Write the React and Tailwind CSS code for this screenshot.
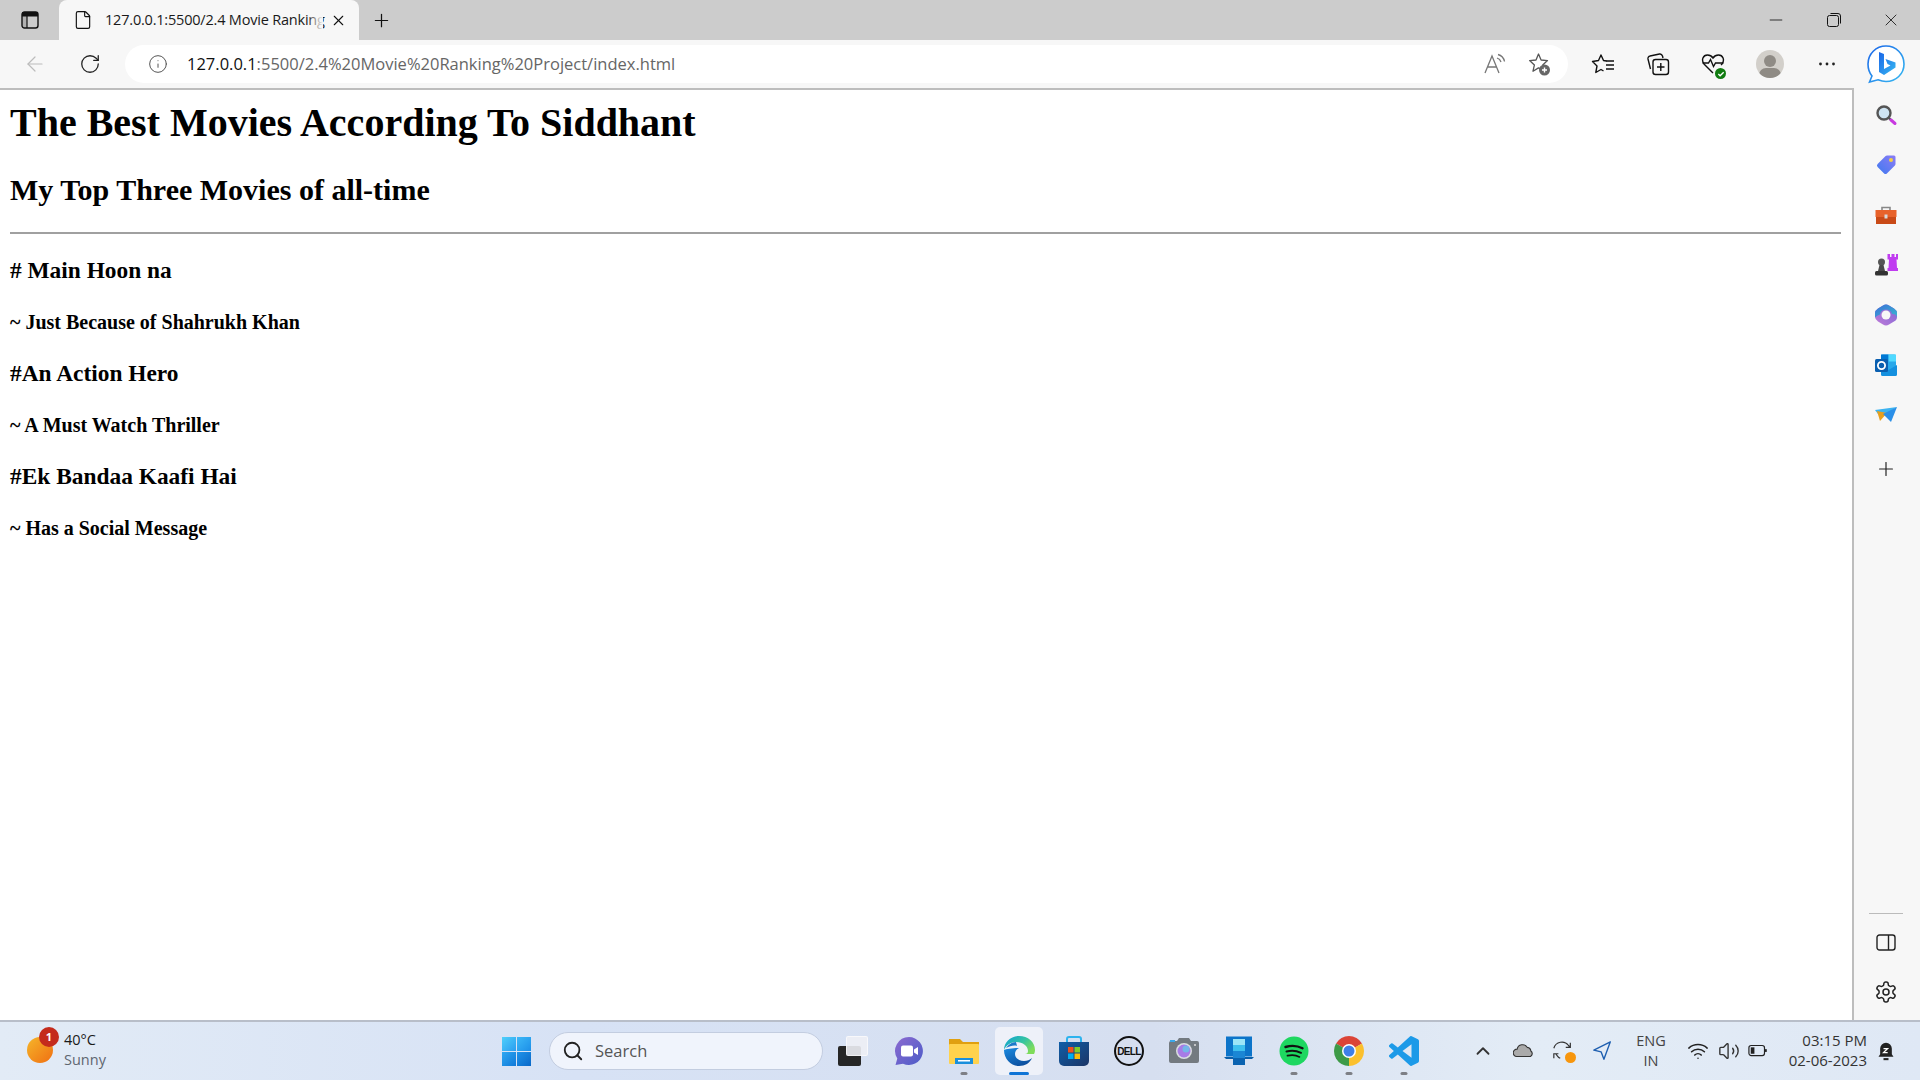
import React from "react";
import { Minus, X, Plus, ArrowLeft, RotateCw, Info, File, Search, ChevronUp, Wifi, Volume2 } from "lucide-react";

const S = ({ size = 24, children, vb = "0 0 24 24", className = "" }) => (
  <svg width={size} height={size} viewBox={vb} fill="none" className={className}>{children}</svg>
);

const Bing = () => (
  <S size={40} vb="0 0 40 40">
    <defs>
      <linearGradient id="bg1" x1="0" y1="0" x2="1" y2="1"><stop offset="0" stopColor="#1b66e8" /><stop offset="1" stopColor="#37b9f1" /></linearGradient>
    </defs>
    <path d="M20 2C10 2 2 10 2 20c0 5 1.500 9 4 12l-2.500 6 8.500-2.200c2.500 1 5 1.700 8 1.700 10 0 18-7.500 18-17.500S30 2 20 2z" stroke="url(#bg1)" strokeWidth="1.600" fill="#fff" />
    <path d="M13 8l5 2v15l6.500-3.500-3-1.500-2-5 10 3.500v5L18 31l-5-3z" fill="url(#bg1)" />
  </S>
);

const SideSearch = () => (
  <S size={24}><circle cx="10" cy="10" r="6.500" fill="#cfe4f2" stroke="#555" strokeWidth="2.400" /><path d="M15 15l2 2" stroke="#555" strokeWidth="2.400" /><path d="M17 17l4 3.500" stroke="#c83ae0" strokeWidth="3" strokeLinecap="round" /></S>
);
const SideTag = () => (
  <S size={24}>
    <defs><linearGradient id="tg" x1="0" y1="1" x2="1" y2="0"><stop offset="0" stopColor="#3f7af0" /><stop offset="1" stopColor="#8b7cf5" /></linearGradient></defs>
    <path d="M13 2.500h7a1.500 1.500 0 0 1 1.500 1.500v7a2 2 0 0 1-.6 1.400l-8 8a2 2 0 0 1-2.800 0l-6.500-6.500a2 2 0 0 1 0-2.800l8-8A2 2 0 0 1 13 2.500z" fill="url(#tg)" />
    <circle cx="17" cy="7" r="2" fill="#f4cf45" />
  </S>
);
const SideBox = () => (
  <S size={24}>
    <path d="M8 7V4.500h8V7" stroke="#888" strokeWidth="1.600" />
    <rect x="1.500" y="7" width="21" height="7" fill="#e8622a" />
    <rect x="2" y="14" width="20" height="7" fill="#c94a17" />
    <rect x="10.500" y="11.500" width="3" height="4" fill="#d8d8d8" />
  </S>
);
const SideChess = () => (
  <S size={24}>
    <path d="M13.500 1h2.500v3h1.500V1h3v3H22V1h2v5.500h-1.500L23 15h1v3H13.500v-3h1l.5-8.500h-1.500z" fill="#c03cf0" />
    <circle cx="7.500" cy="9" r="3.500" fill="#555" />
    <path d="M5.500 12h4l1.500 6H4z" fill="#4a4a4a" />
    <rect x="1" y="18" width="13" height="4.500" rx="1.500" fill="#333" />
  </S>
);
const SideOffice = () => (
  <S size={24}>
    <defs>
      <linearGradient id="of1" x1="0" y1="0" x2="1" y2="1"><stop offset="0" stopColor="#3c6fd8" /><stop offset="1" stopColor="#38b7d0" /></linearGradient>
      <linearGradient id="of2" x1="0" y1="1" x2="1" y2="0"><stop offset="0" stopColor="#c07ad8" /><stop offset="1" stopColor="#7a68d6" /></linearGradient>
    </defs>
    <path d="M9 2.500Q12 .5 15 2.500l5 3Q23 7.500 23 10v4q0 3-3 4.500l-5 3Q12 23.500 9 21.500l-5-3Q1 16.500 1 14v-4q0-2.500 3-4.500z" fill="url(#of2)" />
    <path d="M9 2.500Q12 .5 15 2.500l5 3Q23 7.500 23 10v4q-1-3.500-5-3-1-4.500-6-4.500-5 0-6 5-3 1-5 3v-4.500q0-2.500 3-4.500z" fill="url(#of1)" />
    <circle cx="12" cy="12" r="4.500" fill="#f7f7f7" />
  </S>
);
const SideOutlook = () => (
  <S size={24}>
    <rect x="7" y="1.500" width="15" height="20" rx="1.500" fill="#28a8ea" />
    <rect x="7" y="1.500" width="7.500" height="7" fill="#0078d4" />
    <rect x="14.500" y="1.500" width="7.500" height="7" fill="#50d9ff" />
    <path d="M7 12l7.500 5L23 12v9.500a1.500 1.500 0 0 1-1.500 1.500H8.500A1.500 1.500 0 0 1 7 21.500z" fill="#1490df" />
    <rect x="1" y="6" width="13" height="13" rx="1.500" fill="#0a5fb0" />
    <circle cx="7.500" cy="12.500" r="3.600" stroke="#fff" strokeWidth="1.800" />
  </S>
);
const SidePlane = () => (
  <S size={24}>
    <path d="M1 7l22-3-11 7-8 0z" fill="#3cb3f0" />
    <path d="M3 8l10 2-7 8z" fill="#e89f1c" />
    <path d="M23 4l-6 15-8-8z" fill="#2a8fe8" />
  </S>
);

const Weather = () => (
  <div className="w-[510px] pl-[27px] flex items-center shrink-0">
    <div className="relative w-[26px] h-[26px] mt-[-2px]">
      <div className="w-[26px] h-[26px] rounded-full bg-[linear-gradient(135deg,#f5b62a,#f06f12)]" />
      <div className="absolute left-[12px] top-[-10px] w-[20px] h-[20px] rounded-full bg-[#c42b1c] text-white text-[11px] font-bold flex items-center justify-center">1</div>
    </div>
    <div className="ml-[11px] text-[14.5px] leading-[20px] mt-[-2px]">
      <div className="text-[#1a1a1a]">40°C</div>
      <div className="text-[#5f6670]">Sunny</div>
    </div>
  </div>
);

const IconSlot = ({ children, dot }) => (
  <div className="relative w-[30px] h-[30px] flex items-center justify-center shrink-0">
    {children}
    {dot && <span className="absolute bottom-[-9px] left-1/2 -translate-x-1/2 w-[7px] h-[3px] rounded-full bg-[#7d7f85]" />}
  </div>
);

const Win = () => (
  <div className="grid grid-cols-2 gap-[1px] w-[29px] h-[29px] shrink-0">
    <div className="bg-[linear-gradient(135deg,#4fd0fb,#2a9df0)]" />
    <div className="bg-[linear-gradient(135deg,#3db8f7,#1c8fe8)]" />
    <div className="bg-[linear-gradient(135deg,#2ea8f2,#0f78d8)]" />
    <div className="bg-[linear-gradient(135deg,#1f94ea,#0a68c8)]" />
  </div>
);

const TaskView = () => (
  <div className="relative w-[30px] h-[30px]">
    <div className="absolute left-0 bottom-0 w-[23px] h-[20px] rounded-[2px] bg-[#262626]" />
    <div className="absolute right-0 top-0 w-[22px] h-[20px] rounded-[2px] bg-[#eef0f5]/90 border border-white/60" />
  </div>
);
const Teams = () => (
  <S size={30} vb="0 0 30 30">
    <defs><linearGradient id="tm" x1="0" y1="0" x2="1" y2="1"><stop offset="0" stopColor="#8c6ad0" /><stop offset="1" stopColor="#4c5cc8" /></linearGradient></defs>
    <path d="M15 1a14 14 0 1 1-6 26.700L1.500 29l1.800-6.500A14 14 0 0 1 15 1z" fill="url(#tm)" />
    <rect x="7" y="9.500" width="12" height="11" rx="2" fill="#fff" />
    <path d="M20 13.500l4-2.500v8l-4-2.500z" fill="#fff" />
  </S>
);
const Explorer = () => (
  <S size={30} vb="0 0 30 30">
    <path d="M0 3h11l3 3h16v5H0z" fill="#e0a010" />
    <rect x="0" y="8" width="30" height="20" rx="1" fill="#ffd24d" />
    <path d="M6 22h18v6H6z" fill="#1a8fdc" />
    <rect x="9" y="24" width="12" height="1.500" fill="#fff" />
  </S>
);
const Edge = () => (
  <S size={32} vb="0 0 32 32">
    <defs>
      <linearGradient id="ed1" x1="0" y1="0" x2="1" y2="0.6"><stop offset="0" stopColor="#0d9fd8" /><stop offset="0.6" stopColor="#36c5a0" /><stop offset="1" stopColor="#7fdc5a" /></linearGradient>
      <linearGradient id="ed2" x1="0" y1="0" x2="0.6" y2="1"><stop offset="0" stopColor="#1a8ae0" /><stop offset="1" stopColor="#0c4f9f" /></linearGradient>
    </defs>
    <path d="M16 1C7.500 1 1 7.500 1 15c2-5 7-8 12-8 7 0 12 4 12 9 0 2-1 3-3 3h9c.6-1 1-2.500 1-4C32 7 25 1 16 1z" fill="url(#ed1)" />
    <path d="M1 15c0 9 7 16 15 16 6 0 11-3 13-8-2 2-5 3-8 3-5 0-9-3-9-7 0-3 2-5 4-6-6 0-13 1-15 2z" fill="url(#ed2)" />
    <path d="M13 7c-4 0-8 3-10 6 4-2 8-3 11-2z" fill="#1b79c9" />
  </S>
);
const Store = () => (
  <S size={30} vb="0 0 30 30">
    <defs><linearGradient id="st" x1="0" y1="0" x2="1" y2="1"><stop offset="0" stopColor="#0f5ea8" /><stop offset="1" stopColor="#1c3566" /></linearGradient></defs>
    <path d="M8 7V3a2 2 0 0 1 2-2h10a2 2 0 0 1 2 2v4" stroke="#2db3ee" strokeWidth="2" />
    <path d="M0 6h30v19a5 5 0 0 1-5 5H5a5 5 0 0 1-5-5z" fill="url(#st)" />
    <rect x="9" y="11" width="5.500" height="5.500" fill="#f1511b" />
    <rect x="15.500" y="11" width="5.500" height="5.500" fill="#80cc28" />
    <rect x="9" y="17.500" width="5.500" height="5.500" fill="#00adef" />
    <rect x="15.500" y="17.500" width="5.500" height="5.500" fill="#fbbc09" />
  </S>
);
const Dell = () => (
  <div className="w-[30px] h-[30px] rounded-full border-[2px] border-[#111] flex items-center justify-center text-[10px] font-bold text-[#111] tracking-[-0.6px] [font-family:'Liberation_Sans',sans-serif]">DELL</div>
);
const Camera = () => (
  <S size={30} vb="0 0 30 30">
    <path d="M0 7a2 2 0 0 1 2-2h6l2-3h10l2 3h6a2 2 0 0 1 2 2v18a2 2 0 0 1-2 2H2a2 2 0 0 1-2-2z" fill="#737a80" />
    <rect x="1" y="4" width="5" height="2" fill="#3ba7e8" />
    <circle cx="15" cy="15" r="8" fill="#d9dde0" />
    <circle cx="15" cy="15" r="6.500" fill="#a77be6" />
    <circle cx="17" cy="13" r="3.500" fill="#74b6e8" />
    <circle cx="26" cy="9" r="1" fill="#ddd" />
  </S>
);
const Phone = () => (
  <S size={30} vb="0 0 30 30">
    <rect x="2" y="0.500" width="26" height="20" fill="#0c74c9" />
    <path d="M0 21h30l-2 2H2z" fill="#0a5ea8" />
    <rect x="9" y="3" width="12" height="24" rx="1" fill="#3ec0ee" />
    <rect x="9" y="3" width="12" height="6" fill="#9be5f7" />
    <rect x="9" y="15" width="12" height="14" fill="#1b86d4" />
    <rect x="9" y="22" width="12" height="7" fill="#0b63b0" />
  </S>
);
const Spotify = () => (
  <S size={30} vb="0 0 30 30">
    <circle cx="15" cy="15" r="14.500" fill="#1ed760" />
    <path d="M6.500 11c6-1.800 12-1.300 17 1.300" stroke="#111" strokeWidth="2.400" strokeLinecap="round" />
    <path d="M7.500 15.500c5-1.400 10-.9 14.500 1.300" stroke="#111" strokeWidth="2" strokeLinecap="round" />
    <path d="M8.500 19.700c4.200-1 8.500-.7 12 1.200" stroke="#111" strokeWidth="1.700" strokeLinecap="round" />
  </S>
);
const Chrome = () => (
  <S size={30} vb="0 0 30 30">
    <path d="M15 15L2.010 7.500A15 15 0 0 1 27.990 7.500z" fill="#db4437" />
    <path d="M15 15L27.990 7.500A15 15 0 0 1 15 30z" fill="#fbc02d" />
    <path d="M15 15L15 30A15 15 0 0 1 2.010 7.500z" fill="#3d9a47" />
    <circle cx="15" cy="15" r="7" fill="#fff" />
    <circle cx="15" cy="15" r="5.500" fill="#3f7fe8" />
  </S>
);
const VSCode = () => (
  <svg width="30" height="30" viewBox="0 0 24 24">
    <path d="M23.15 2.587L18.21.21a1.494 1.494 0 0 0-1.705.29l-9.46 8.63-4.12-3.128a.999.999 0 0 0-1.276.057L.327 7.261A1 1 0 0 0 .326 8.74L3.899 12 .326 15.26a1 1 0 0 0 .001 1.479L1.65 17.94a.999.999 0 0 0 1.276.057l4.12-3.128 9.46 8.63a1.492 1.492 0 0 0 1.704.29l4.942-2.377A1.5 1.5 0 0 0 24 20.06V3.939a1.5 1.5 0 0 0-.85-1.352zm-5.146 14.861L10.826 12l7.178-5.448v10.896z" fill="#1c9ae8" />
  </svg>
);

const TaskCenter = () => (
  <div className="flex items-center h-full shrink-0">
    <div className="ml-[-8px]"><Win /></div>
    <div className="ml-[18px] w-[274px] h-[38px] rounded-full bg-[#f0f4fc] border border-[#c3cde0] flex items-center pl-[12px] shrink-0">
      <Search size={22} strokeWidth={2} className="text-[#222]" />
      <span className="ml-[11px] text-[16.5px] text-[#555]">Search</span>
    </div>
    <div className="ml-[15px]"><IconSlot><TaskView /></IconSlot></div>
    <div className="ml-[26px]"><IconSlot><Teams /></IconSlot></div>
    <div className="ml-[25px]"><IconSlot dot><Explorer /></IconSlot></div>
    <div className="relative ml-[16px] w-[48px] h-[48px] rounded-[5px] bg-[#eef1f9] flex items-center justify-center shrink-0">
      <Edge />
      <span className="absolute bottom-0 left-1/2 -translate-x-1/2 w-[20px] h-[3px] rounded-full bg-[#0f74d6]" />
    </div>
    <div className="ml-[16px]"><IconSlot><Store /></IconSlot></div>
    <div className="ml-[25px]"><IconSlot><Dell /></IconSlot></div>
    <div className="ml-[25px]"><IconSlot><Camera /></IconSlot></div>
    <div className="ml-[25px]"><IconSlot><Phone /></IconSlot></div>
    <div className="ml-[25px]"><IconSlot dot><Spotify /></IconSlot></div>
    <div className="ml-[25px]"><IconSlot dot><Chrome /></IconSlot></div>
    <div className="ml-[25px]"><IconSlot dot><VSCode /></IconSlot></div>
  </div>
);

const Tray = () => (
  <div className="flex items-center ml-auto pr-[24px] text-[#333] shrink-0">
    <ChevronUp size={22} strokeWidth={2} className="text-[#333]" />
    <div className="ml-[19px]">
      <S size={22}><path d="M4 18a4 4 0 0 1 .5-8 6 6 0 0 1 11-2 4.500 4.500 0 0 1 4 4A3.500 3.500 0 0 1 19 18z" fill="#aaa" stroke="#333" strokeWidth="1.200" /></S>
    </div>
    <div className="relative ml-[17px] w-[22px] h-[22px]">
      <S size={22}><path d="M2 9a9 9 0 0 1 16-3l2 2M20 3v5h-5M4 15l2 2.500A8 8 0 0 0 9 20M2 20v-5h5" stroke="#333" strokeWidth="1.300" /></S>
      <span className="absolute right-[-2px] bottom-[-1px] w-[11px] h-[11px] rounded-full bg-[#f7960d]" />
    </div>
    <div className="ml-[18px]">
      <S size={22}><path d="M20 2L2 11l8 2 3 8z" stroke="#1e5fb0" strokeWidth="1.500" strokeLinejoin="round" /></S>
    </div>
    <div className="ml-[21px] w-[32px] text-center text-[14.5px] leading-[20px] text-[#444]">ENG<br />IN</div>
    <div className="ml-[20px]"><Wifi size={22} strokeWidth={1.700} className="text-[#222]" /></div>
    <div className="ml-[9px]"><Volume2 size={22} strokeWidth={1.500} className="text-[#333]" /></div>
    <div className="ml-[8px]">
      <S size={22}><rect x="1" y="6" width="17" height="11" rx="2.500" stroke="#222" strokeWidth="1.300" /><rect x="3" y="8" width="4" height="7" fill="#222" /><rect x="18.500" y="10" width="2" height="3" fill="#222" /></S>
    </div>
    <div className="ml-[15px] mt-[-2px] w-[82px] text-right text-[15px] leading-[20px] text-[#333] whitespace-nowrap">
      <div>03:15 PM</div>
      <div>02-06-2023</div>
    </div>
    <div className="ml-[9px]">
      <S size={20}>
        <path d="M12 2a7 7 0 0 1 7 7v7l2 3H3l2-3V9a7 7 0 0 1 7-7z" fill="#222" />
        <rect x="9" y="20.500" width="6" height="2.500" fill="#222" />
        <path d="M9 9h5l-5 5h5" stroke="#fff" strokeWidth="1.500" />
      </S>
    </div>
  </div>
);

const Sidebar = () => (
  <aside className="w-[68px] shrink-0 border-l-[2px] border-[#bdbdbd] bg-[#f7f7f7] flex flex-col items-center pt-[13px] pr-[2px]">
    <div className="flex flex-col items-center gap-[26px]">
      <SideSearch /><SideTag /><SideBox /><SideChess /><SideOffice /><SideOutlook /><SidePlane />
    </div>
    <Plus size={22} strokeWidth={1.300} className="mt-[31px] text-[#222]" />
    <div className="mt-auto w-[34px] border-t border-[#bbbbbb]" />
    <svg width="20" height="18" viewBox="0 0 20 18" fill="none" className="mt-[20px]"><rect x="1" y="1" width="18" height="15" rx="2.500" stroke="#222" strokeWidth="1.400" /><path d="M12.500 1v15" stroke="#222" strokeWidth="1.400" /></svg>
    <svg width="24" height="24" viewBox="0 0 24 24" fill="none" stroke="#222" strokeWidth="1.500" className="mt-[28px] mb-[16px]">
      <path d="M12.220 2h-.44a2 2 0 0 0-2 2v.18a2 2 0 0 1-1 1.730l-.43.25a2 2 0 0 1-2 0l-.15-.08a2 2 0 0 0-2.730.73l-.22.380a2 2 0 0 0 .730 2.730l.150.100a2 2 0 0 1 1 1.720v.510a2 2 0 0 1-1 1.740l-.150.090a2 2 0 0 0-.730 2.730l.220.380a2 2 0 0 0 2.730.730l.150-.080a2 2 0 0 1 2 0l.430.250a2 2 0 0 1 1 1.730V20a2 2 0 0 0 2 2h.440a2 2 0 0 0 2-2v-.180a2 2 0 0 1 1-1.730l.430-.250a2 2 0 0 1 2 0l.150.080a2 2 0 0 0 2.730-.730l.220-.390a2 2 0 0 0-.730-2.730l-.150-.080a2 2 0 0 1-1-1.740v-.500a2 2 0 0 1 1-1.740l.150-.090a2 2 0 0 0 .730-2.730l-.220-.380a2 2 0 0 0-2.730-.730l-.150.080a2 2 0 0 1-2 0l-.430-.250a2 2 0 0 1-1-1.730V4a2 2 0 0 0-2-2z" />
      <circle cx="12" cy="12" r="3" />
    </svg>
  </aside>
);

const TabStrip = () => (
  <div className="h-[40px] bg-[#cccccc] flex items-stretch relative shrink-0">
    <div className="w-[59px] flex items-center pl-[21px] shrink-0">
      <svg width="18" height="18" viewBox="0 0 18 18" fill="none"><rect x="1" y="1" width="16" height="16" rx="2.500" stroke="#111" strokeWidth="1.400" /><rect x="1" y="1" width="16" height="4.500" fill="#111" /><rect x="1" y="1" width="5" height="16" fill="#111" fillOpacity="0.15" /><path d="M6 5v12" stroke="#111" strokeWidth="1.200" /></svg>
    </div>
    <div className="relative w-[300px] bg-[#f7f7f7] rounded-t-[8px] flex items-center pl-[14px] shrink-0">
      <File size={20} strokeWidth={1.400} className="text-[#111]" />
      <span className="ml-[12px] whitespace-nowrap text-[14.5px] tracking-[-0.2px] text-[#1a1a1a]">127.0.0.1:5500/2.4 Movie Ranking</span>
      <div className="absolute left-[248px] top-0 h-full w-[16px] bg-[linear-gradient(90deg,transparent,#f7f7f7)]" />
      <X size={17} strokeWidth={1.500} className="absolute right-[12px] text-[#111]" />
    </div>
    <div className="ml-[12px] flex items-center">
      <Plus size={21} strokeWidth={1.400} className="text-[#111]" />
    </div>
    <div className="ml-auto flex items-center pr-[19px] text-[#111]">
      <Minus size={20} strokeWidth={1} />
      <svg width="16" height="16" viewBox="0 0 16 16" fill="none" stroke="#111" strokeWidth="1" className="ml-[40px]"><rect x="1.500" y="3.500" width="11" height="11" rx="2" /><path d="M4.500 1.500h7.500a2.500 2.500 0 0 1 2.500 2.500v7.500" /></svg>
      <X size={20} strokeWidth={1} className="ml-[39px]" />
    </div>
  </div>
);

const Toolbar = () => (
  <div className="h-[48px] bg-[#f7f7f7] flex items-center relative shrink-0">
    <ArrowLeft size={24} strokeWidth={1.200} className="ml-[23px] text-[#bcbcbc]" />
    <RotateCw size={22} strokeWidth={1.400} className="ml-[32px] text-[#222]" />
    <div className="ml-[24px] w-[1443px] h-[38px] rounded-full bg-white flex items-center pl-[23px] shrink-0">
      <Info size={20} strokeWidth={1.200} className="text-[#555]" />
      <span className="ml-[19px] text-[16.5px] whitespace-nowrap text-[#666]"><span className="text-[#111]">127.0.0.1</span>:5500/2.4%20Movie%20Ranking%20Project/index.html</span>
      <div className="ml-auto flex items-center pr-[16px] gap-[21px]">
        <svg width="24" height="24" viewBox="0 0 24 24" fill="none" stroke="#777" strokeWidth="1.300"><path d="M2 21L9 4l7 17M4.500 15h9" /><path d="M14 6a6 6 0 0 1 4 4M15 2.500a9 9 0 0 1 6.500 7" /></svg>
        <svg width="24" height="24" viewBox="0 0 24 24" fill="none"><path d="M10.500 2l2.600 6 6.400.6-4.800 4.300 1.400 6.300-5.600-3.300L5 19.200l1.400-6.300L1.600 8.600 8 8z" stroke="#555" strokeWidth="1.300" strokeLinejoin="round" /><circle cx="16.500" cy="18" r="5.500" fill="#666" /><path d="M16.500 15.500v5M14 18h5" stroke="#fff" strokeWidth="1.400" /></svg>
      </div>
    </div>
    <div className="flex items-center ml-[23px]">
      <svg width="24" height="24" viewBox="0 0 24 24" fill="none" stroke="#111" strokeWidth="1.400"><path d="M15.500 9L12.500 8.500 10 3 7.500 8.500 1.500 9.500 6 14 4.800 20.500 10 17.500 12.500 19" strokeLinejoin="round" /><path d="M15 9h8M15 13h8M15 17h8" /></svg>
      <svg width="24" height="24" viewBox="0 0 24 24" fill="none" stroke="#111" strokeWidth="1.400" className="ml-[31px]"><rect x="7" y="7.500" width="15.500" height="15" rx="2.500" /><path d="M14.800 11v8M11 15h7.500" /><path d="M4.500 17L2 7a2.500 2.500 0 0 1 2-3l9.500-2c1.500-.3 2.500.5 3 2l.5 2" /></svg>
      <div className="relative ml-[31px] w-[24px] h-[24px]">
        <svg width="24" height="24" viewBox="0 0 24 24" fill="none" stroke="#111" strokeWidth="1.400"><path d="M12 21L3 12C0 8 2 3 6.500 3 9 3 11 4.500 12 6c1-1.500 3-3 5.500-3C22 3 24 8 21 12l-1 1" /><path d="M1.500 11h6l2-3.500 3 7 2-3.500h8" /></svg>
        <span className="absolute right-[-1px] bottom-[-3px] w-[11px] h-[11px] rounded-full bg-[#107c10] flex items-center justify-center">
          <svg width="8" height="8" viewBox="0 0 9 9" fill="none" stroke="#fff" strokeWidth="1.500"><path d="M1.500 4.500l2 2 4-4" /></svg>
        </span>
      </div>
      <div className="relative ml-[31px] w-[28px] h-[28px] rounded-full bg-[#d2cfca] overflow-hidden shrink-0">
        <span className="absolute left-[8px] top-[5px] w-[12px] h-[12px] rounded-full bg-[#8f8b85]" />
        <span className="absolute left-[3px] top-[18px] w-[22px] h-[14px] rounded-full bg-[#8f8b85]" />
      </div>
      <svg width="24" height="24" viewBox="0 0 24 24" fill="#222" className="ml-[31px]"><circle cx="5.500" cy="12" r="1.400" /><circle cx="12" cy="12" r="1.400" /><circle cx="18.500" cy="12" r="1.400" /></svg>
      <div className="ml-[27px]"><Bing /></div>
    </div>
  </div>
);

const Page = () => (
  <main className="flex-1 bg-white pl-[10px] pr-[11px] pt-[10px] overflow-hidden text-black [font-family:'Liberation_Serif',serif] font-bold">
    <h1 className="text-[40px] leading-[46px]">The Best Movies According To Siddhant</h1>
    <h2 className="mt-[27px] text-[30px] leading-[34px]">My Top Three Movies of all-time</h2>
    <hr className="mt-[25px] border-0 h-[2px] bg-[#a0a0a0]" />
    <h3 className="mt-[23px] text-[23.4px] leading-[27px]"># Main Hoon na</h3>
    <h4 className="mt-[27px] text-[20px] leading-[23px]">~ Just Because of Shahrukh Khan</h4>
    <h3 className="mt-[26px] text-[23.4px] leading-[27px]">#An Action Hero</h3>
    <h4 className="mt-[27px] text-[20px] leading-[23px]">~ A Must Watch Thriller</h4>
    <h3 className="mt-[26px] text-[23.4px] leading-[27px]">#Ek Bandaa Kaafi Hai</h3>
    <h4 className="mt-[27px] text-[20px] leading-[23px]">~ Has a Social Message</h4>
  </main>
);

export default function App() {
  return (
    <div className="w-[1920px] h-[1080px] overflow-hidden flex flex-col [font-family:'Open_Sans',sans-serif]">
      <TabStrip />
      <Toolbar />
      <div className="h-[2px] shrink-0 flex">
        <div className="w-[1854px] bg-[#bdbdbd]" />
        <div className="flex-1 bg-[#f7f7f7]" />
      </div>
      <div className="flex-1 flex min-h-0">
        <Page />
        <Sidebar />
      </div>
      <footer className="h-[60px] shrink-0 border-t-[2px] border-[#b8bec9] flex items-center bg-[linear-gradient(90deg,#e2ebf6_0%,#d7e2f5_30%,#d6dff0_60%,#e3ecf6_80%,#dfe8f5_100%)]">
        <Weather />
        <TaskCenter />
        <Tray />
      </footer>
    </div>
  );
}
